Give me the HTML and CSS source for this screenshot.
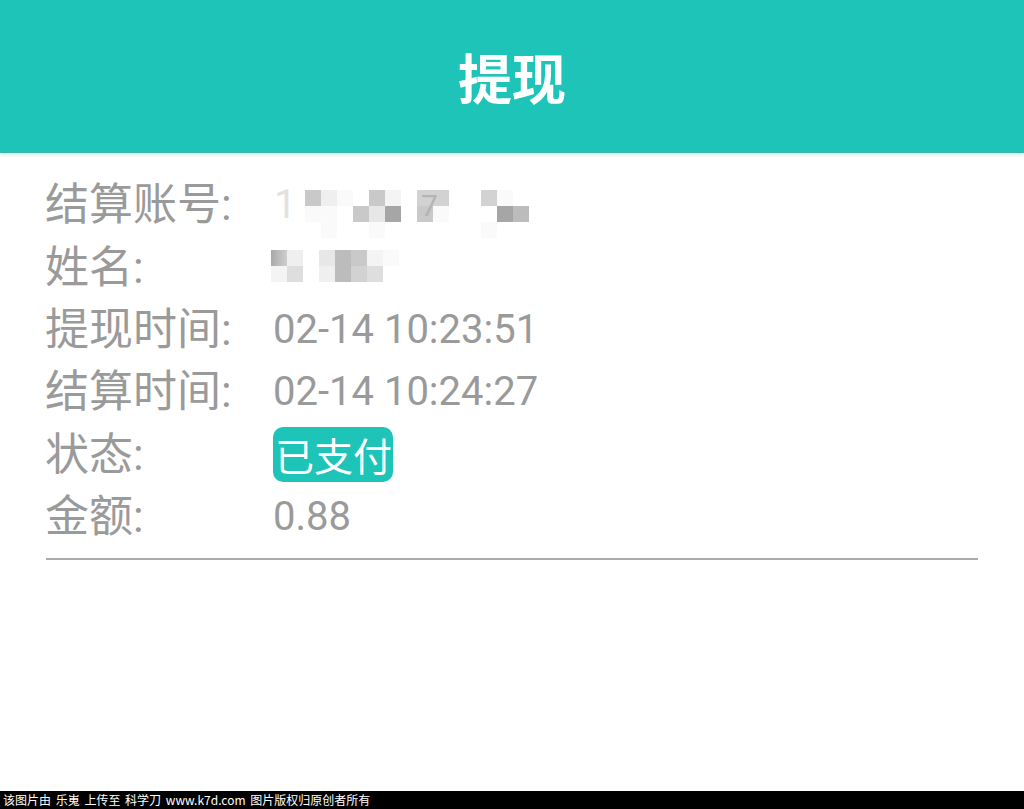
FILE: index.html
```html
<!DOCTYPE html>
<html>
<head>
	<meta charset="utf-8">
	<title>提现</title>
	<link rel="stylesheet" href="styles.css">
</head>
<body>
<div class="page">
	<div class="titleBar">提现</div>

	<div class="info">
		<div class="label">结算账号:</div>
		<div class="value">
			<span class="faint">1</span>
			<div class="mosaic acct">
				<span class="g2"></span><span class="g7"></span><span class="g9"></span><span></span><span class="g2"></span><span class="g8"></span><span></span><span class="g3 seven">7</span><span class="g3"></span><span></span><span></span><span class="g3"></span><span class="g9"></span><span></span>
				<span class="g9"></span><span class="g9"></span><span></span><span class="g2"></span><span class="g6"></span><span class="g0"></span><span></span><span class="g2"></span><span class="g9"></span><span></span><span></span><span></span><span class="g0"></span><span class="g1"></span>
				<span></span><span class="g9"></span><span></span><span></span><span class="g9"></span><span></span><span></span><span></span><span></span><span></span><span></span><span class="g9"></span><span></span><span></span>
			</div>
		</div>

		<div class="label">姓名:</div>
		<div class="value">
			<div class="mosaic name">
				<span class="g1 shade"></span><span class="g7"></span><span></span><span class="g6"></span><span class="g1"></span><span class="g2"></span><span class="g8"></span><span class="g9"></span>
				<span class="g8"></span><span class="g5"></span><span></span><span class="g7"></span><span class="g1"></span><span class="g3"></span><span class="g5"></span><span></span>
			</div>
		</div>

		<div class="label">提现时间:</div>
		<div class="value">02-14 10:23:51</div>

		<div class="label">结算时间:</div>
		<div class="value">02-14 10:24:27</div>

		<div class="label">状态:</div>
		<div class="value"><span class="badge">已支付</span></div>

		<div class="label">金额:</div>
		<div class="value">0.88</div>
	</div>

	<div class="divider"></div>

	<div class="footer">该图片由 乐嵬 上传至 科学刀 www.k7d.com 图片版权归原创者所有</div>
</div>
</body>
</html>
```

FILE: styles.css
```css
html, body {
	margin: 0;
	padding: 0;
	background: #fff;
}
.page {
	display: flex;
	flex-direction: column;
	height: 809px;
	font-family: Roboto, "Noto Sans CJK SC", sans-serif;
}
.titleBar {
	height: 152px;
	background-color: #1fc4b8;
	border-bottom: 1px solid #3fb3aa;
	box-shadow: 0 2px 3px rgba(31, 196, 184, 0.25);
	color: #fff;
	font-family: "Noto Sans CJK SC", sans-serif;
	font-weight: bold;
	font-size: 54px;
	display: flex;
	align-items: center;
	justify-content: center;
}
.info {
	display: grid;
	grid-template-columns: 228px 1fr;
	grid-auto-rows: 62.4px;
	align-items: center;
	padding: 21px 0 0 45px;
	color: #9a9a9a;
}
.label {
	font-size: 44px;
	line-height: 1;
}
.value {
	font-size: 40px;
	line-height: 1;
	display: flex;
	align-items: center;
}
.faint {
	color: #e2e2e2;
	width: 31px;
	padding-left: 1px;
}
.mosaic {
	display: grid;
	grid-template-columns: repeat(14, 16px);
	grid-auto-rows: 16px;
}
.mosaic span {
	display: block;
}
.acct {
	margin-top: 18px;
}
.name {
	grid-template-columns: repeat(8, 16px);
	margin-top: -4px;
	margin-left: -2px;
}
.seven {
	font-size: 30px;
	line-height: 32px;
	height: 16px;
	color: #b4b4b4;
	text-indent: 4px;
	overflow: visible;
	position: relative;
	z-index: 1;
}
.g0 { background: #a6a6a6; }
.g1 { background: #bcbcbc; }
.g2 { background: #c9c9c9; }
.g3 { background: #d2d2d2; }
.g5 { background: #dedede; }
.g6 { background: #e7e7e7; }
.g7 { background: #efefef; }
.g8 { background: #f4f4f4; }
.g9 { background: #fafafa; }
.shade {
	background: linear-gradient(90deg, #a9a9a9, #cfcfcf);
}
.badge {
	display: inline-block;
	background-color: #1fc4b8;
	color: #fff;
	font-family: "Noto Sans CJK SC", sans-serif;
	font-size: 39px;
	line-height: 1;
	padding: 8px 1px 8px 2px;
	border-radius: 10px;
}
.divider {
	margin: 10px 46px 0 46px;
	height: 2px;
	background-color: #ababab;
}
.footer {
	margin-top: auto;
	height: 18px;
	line-height: 18px;
	background: #000;
	color: #fff;
	font-family: "Noto Sans CJK SC", sans-serif;
	font-size: 12px;
	padding-left: 3px;
	word-spacing: 2px;
	white-space: nowrap;
}
```
